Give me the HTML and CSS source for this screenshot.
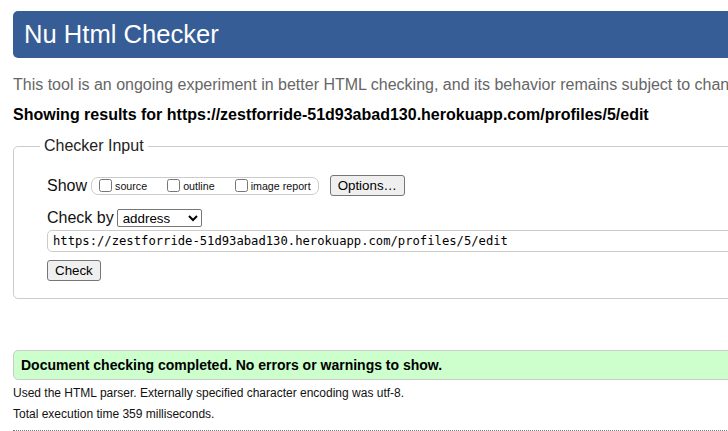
FILE: index.html
```html
<!DOCTYPE html>
<html lang="en">
<head>
<meta charset="utf-8">
<title>Nu Html Checker</title>
<link rel="stylesheet" href="styles.css">
</head>
<body>
<div class="page">
  <h1 class="title">Nu Html Checker</h1>
  <p class="intro">This tool is an ongoing experiment in better HTML checking, and its behavior remains subject to change</p>
  <p class="showing">Showing results for https://zestforride-51d93abad130.herokuapp.com/profiles/5/edit</p>
  <form class="checker-form">
    <fieldset class="checker">
      <legend class="checker-legend">Checker Input</legend>
      <div class="row show-row">
        <span class="row-label">Show</span>
        <span class="show-opts">
          <label class="opt"><input type="checkbox" class="cb">source</label>
          <label class="opt"><input type="checkbox" class="cb">outline</label>
          <label class="opt opt-last"><input type="checkbox" class="cb">image report</label>
        </span>
        <button type="button" class="btn btn-options">Options…</button>
      </div>
      <div class="row checkby-row">
        <span class="row-label">Check by</span>
        <select class="select">
          <option>address</option>
          <option>file upload</option>
          <option>text input</option>
        </select>
      </div>
      <input type="text" class="url" value="https://zestforride-51d93abad130.herokuapp.com/profiles/5/edit">
      <div class="submit-row">
        <button type="button" class="btn">Check</button>
      </div>
    </fieldset>
  </form>
  <p class="success">Document checking completed. No errors or warnings to show.</p>
  <p class="meta">Used the HTML parser. Externally specified character encoding was utf-8.</p>
  <p class="meta">Total execution time 359 milliseconds.</p>
  <hr class="sep">
</div>
</body>
</html>
```
FILE: styles.css
```css
html, body {
  margin: 0;
  padding: 0;
  overflow: hidden;
  background: #fff;
}
body {
  font-family: "Liberation Sans", Arial, sans-serif;
  color: #111;
}
.page {
  width: 1200px;
  padding: 11px 13px 0 13px;
}
.title {
  margin: 0;
  height: 47px;
  line-height: 47px;
  padding: 0 11px;
  background: #365d95;
  color: #fff;
  font-size: 25.6px;
  font-weight: normal;
  border-radius: 5px;
}
.intro {
  margin: 18px 0 0;
  font-size: 16px;
  line-height: 18px;
  color: #666;
  white-space: nowrap;
}
.showing {
  margin: 12px 0 0;
  font-size: 16px;
  line-height: 18px;
  font-weight: bold;
  color: #000;
}
.checker-form {
  margin: 13px 0 0;
}
.checker {
  margin: 0;
  border: 1px solid #ccc;
  border-radius: 5px;
  padding: 20px 33px 17px 33px;
}
.checker-legend {
  font-size: 16px;
  line-height: 18px;
  padding: 0 4px;
  margin-left: -7px;
  color: #222;
}
.row {
  display: flex;
  align-items: center;
}
.row-label {
  font-size: 16px;
  line-height: 18px;
  color: #111;
}
.show-row {
  height: 21px;
}
.show-opts {
  display: inline-flex;
  align-items: center;
  box-sizing: border-box;
  height: 18px;
  margin-left: 4px;
  padding: 0 7px 0 3px;
  border: 1px solid #ccc;
  border-radius: 7px;
}
.opt {
  display: inline-flex;
  align-items: center;
  font-size: 10.7px;
  color: #111;
  margin-right: 16px;
}
.opt-last {
  margin-right: 0;
}
.cb {
  width: 13px;
  height: 13px;
  margin: 0 3px 0 4px;
}
.btn {
  font-family: "Liberation Sans", Arial, sans-serif;
  font-size: 13.33px;
  height: 21px;
  padding: 0 7px;
  background: #efefef;
  color: #000;
  border: 1px solid #767676;
  border-radius: 3px;
  line-height: 19px;
}
.btn-options {
  margin-left: 11px;
}
.checkby-row {
  margin-top: 13px;
  height: 18px;
}
.select {
  margin-left: 3px;
  width: 85px;
  height: 18px;
  font-family: "Liberation Sans", Arial, sans-serif;
  font-size: 13.33px;
  color: #000;
  background: #fff;
  border: 1px solid #767676;
  border-radius: 2px;
  padding: 0 0 0 1px;
}
.url {
  display: block;
  box-sizing: border-box;
  margin: 3px 0 0;
  width: 1200px;
  height: 22px;
  padding: 0 5px;
  border: 1px solid #ccc;
  border-radius: 5px;
  font-family: "DejaVu Sans Mono", "Liberation Mono", monospace;
  font-size: 12.2px;
  color: #000;
  outline: none;
}
.submit-row {
  margin-top: 8px;
  display: flex;
}
.success {
  margin: 51px 0 0;
  height: 30px;
  box-sizing: border-box;
  line-height: 28px;
  padding: 0 7px;
  background: #ccffcc;
  border: 1px solid #ccc;
  border-radius: 5px;
  font-size: 14px;
  font-weight: bold;
  color: #000;
}
.meta {
  margin: 3px 0 0;
  font-size: 12px;
  line-height: 21px;
  color: #111;
}
.meta + .meta {
  margin-top: 0;
}
.sep {
  margin: 5px 0 0;
  border: 0;
  border-top: 1px dotted #777;
  height: 0;
}
```
